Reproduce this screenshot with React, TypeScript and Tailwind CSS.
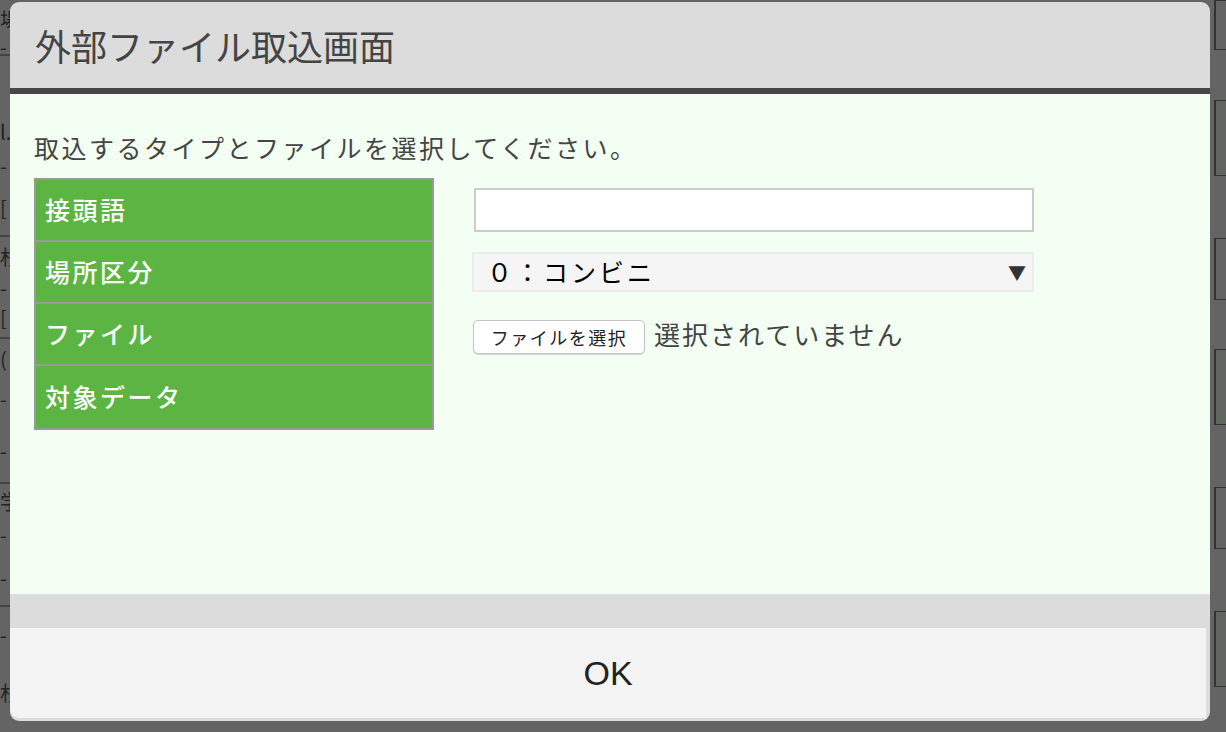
import React from "react";

const jp = { fontFamily: '"Noto Sans CJK JP", "Noto Sans", sans-serif' };

function LeftStrip() {
  const rows: { h: number; t: string; line?: boolean }[] = [
    { h: 40, t: "場" },
    { h: 16, t: "-", line: true },
    { h: 56, t: "" },
    { h: 40, t: "l." },
    { h: 28, t: "-" },
    { h: 57, t: "[", line: true },
    { h: 40, t: "杉" },
    { h: 22, t: "-" },
    { h: 40, t: "[", line: true },
    { h: 40, t: "(" },
    { h: 40, t: "-" },
    { h: 65, t: "-", line: true },
    { h: 36, t: "学" },
    { h: 30, t: "-" },
    { h: 57, t: "-", line: true },
    { h: 56, t: "-" },
    { h: 60, t: "杉" },
  ];
  return (
    <div className="w-[10px] shrink-0 h-full overflow-hidden flex flex-col bg-[#646464]" style={jp}>
      {rows.map((r, i) => (
        <div
          key={i}
          className={`shrink-0 flex items-center overflow-hidden text-[20px] leading-none text-[#222] whitespace-nowrap ${r.line ? "border-b-2 border-[#444]" : ""}`}
          style={{ height: r.h }}
        >
          {r.t}
        </div>
      ))}
    </div>
  );
}

function RightStrip() {
  const segs: { gap: number; h: number; bg: string }[] = [
    { gap: 0, h: 50, bg: "#646464" },
    { gap: 50, h: 76, bg: "#606560" },
    { gap: 62, h: 62, bg: "#646464" },
    { gap: 49, h: 76, bg: "#606560" },
    { gap: 62, h: 62, bg: "#646464" },
    { gap: 62, h: 76, bg: "#606560" },
  ];
  return (
    <div className="w-[16px] shrink-0 h-full overflow-hidden flex flex-col bg-[#646464]">
      {segs.map((s, i) => (
        <div
          key={i}
          className="shrink-0 ml-[4px] w-[20px] border-l-2 border-y border-[#333]"
          style={{ marginTop: s.gap, height: s.h, backgroundColor: s.bg }}
        />
      ))}
    </div>
  );
}

const labels = ["接頭語", "場所区分", "ファイル", "対象データ"];

export default function App() {
  return (
    <div className="w-[1226px] h-[732px] overflow-hidden flex bg-[#646464]" style={jp}>
      <LeftStrip />
      <div className="w-[1200px] shrink-0 mt-[2px] h-[719px] rounded-[9px] overflow-hidden flex flex-col bg-[#dcdcdc]">
        <div className="h-[86px] shrink-0 flex items-center pl-[25px] text-[36px] text-[#444]">
          外部ファイル取込画面
        </div>
        <div className="h-[6px] shrink-0 bg-[#474747]" />
        <div className="h-[500px] shrink-0 bg-[#f2fff2] pl-[24px] pt-[36px]">
          <div className="text-[25px] leading-[34px] text-[#444] tracking-[2.5px]">
            取込するタイプとファイルを選択してください。
          </div>
          <div className="mt-[14px] flex items-start">
            <div className="w-[400px] shrink-0 border-2 border-[#999] bg-[#5cb443] flex flex-col divide-y-2 divide-[#999]">
              {labels.map((l) => (
                <div
                  key={l}
                  className="h-[62px] flex items-center pl-[9px] text-[25px] font-medium text-white tracking-[2.5px]"
                >
                  {l}
                </div>
              ))}
            </div>
            <div className="ml-[40px] pt-[10px] flex flex-col">
              <div className="w-[560px] h-[44px] border-2 border-[#ccc] bg-white" />
              <div className="mt-[20px] w-[562px] -ml-[2px] h-[40px] border-2 border-[#ececec] bg-[#f5f5f5] flex items-center justify-between pl-[13px] pr-[6px]">
                <span className="text-[25px] text-black tracking-[3px]">０：コンビニ</span>
                <span className="text-[18px] text-[#333]">▼</span>
              </div>
              <div className="mt-[28px] flex items-start -ml-[1px]">
                <div className="w-[172px] h-[34px] rounded-[5px] border border-[#c4c4c4] bg-white shadow-[0_1px_1px_rgba(0,0,0,0.15)] flex items-center justify-center text-[18px] text-[#222] tracking-[1.5px]">
                  ファイルを選択
                </div>
                <span className="ml-[9px] -mt-[4px] text-[26px] leading-[36px] text-[#444] tracking-[2px]">
                  選択されていません
                </span>
              </div>
            </div>
          </div>
        </div>
        <div className="h-[34px] shrink-0 bg-[#dcdcdc]" />
        <div
          className="h-[90px] shrink-0 mr-[4px] bg-[#f4f4f4] rounded-bl-[9px] flex items-center justify-center text-[34px] text-[#222]"
          style={{ fontFamily: '"Liberation Sans", Arial, sans-serif' }}
        >
          OK
        </div>
      </div>
      <RightStrip />
    </div>
  );
}
